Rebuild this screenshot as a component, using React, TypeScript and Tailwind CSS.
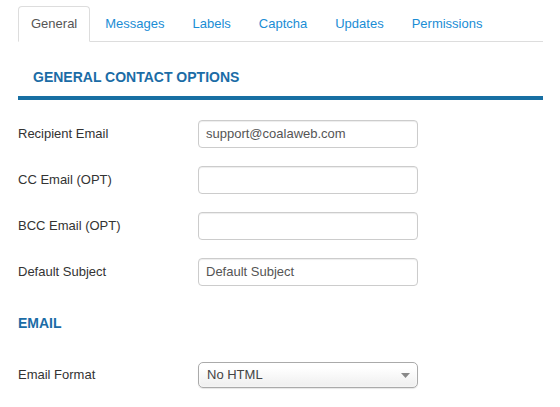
import React from "react";

const tabs = ["General", "Messages", "Labels", "Captcha", "Updates", "Permissions"];

const fields = [
  { label: "Recipient Email", value: "support@coalaweb.com" },
  { label: "CC Email (OPT)", value: "" },
  { label: "BCC Email (OPT)", value: "" },
  { label: "Default Subject", value: "Default Subject" },
];

function Tabs() {
  return (
    <ul className="flex border-b border-[#dddddd]">
      {tabs.map((tab, i) => {
        const active = i === 0;
        return (
          <li
            key={tab}
            className={
              active
                ? "-mb-px mr-[2px] rounded-t-[4px] border border-[#dddddd] border-b-white bg-white px-[12px] py-[8px] leading-[18px] text-[#555555]"
                : "-mb-px mr-[2px] rounded-t-[4px] border border-transparent px-[12px] py-[8px] leading-[18px] text-[#1a8dd5]"
            }
          >
            {tab}
          </li>
        );
      })}
    </ul>
  );
}

function Field({ label, value }: { label: string; value: string }) {
  return (
    <div className="mb-[18px] flex h-[28px] items-center">
      <label className="w-[180px] text-[#333333]">{label}</label>
      <div className="flex h-[28px] w-[220px] items-center rounded-[4px] border border-[#cccccc] bg-white px-[7px] text-[#555555] shadow-[inset_0_1px_1px_rgba(0,0,0,0.075)]">
        {value}
      </div>
    </div>
  );
}

export default function App() {
  return (
    <div className="flex min-h-[407px] flex-col bg-white pl-[18px] pr-[17px] pt-[6px] font-['Liberation_Sans',Arial,sans-serif] text-[13px]">
      <Tabs />

      <div className="mt-[25px] h-[20px] pl-[15px] text-[14px] font-bold uppercase leading-[20px] text-[#1b6ca6]">
        General Contact Options
      </div>
      <div className="mt-[9px] h-[4px] bg-[#176fa3]" />

      <div className="mt-[20px] flex flex-col">
        {fields.map((f) => (
          <Field key={f.label} label={f.label} value={f.value} />
        ))}
      </div>

      <div className="mt-[9px] h-[20px] text-[14px] font-bold uppercase leading-[20px] text-[#1b6ca6]">
        Email
      </div>

      <div className="mt-[29px] flex h-[26px] items-center">
        <label className="w-[180px] text-[#333333]">Email Format</label>
        <div className="flex h-[26px] w-[220px] items-center justify-between rounded-[5px] border border-[#aaaaaa] bg-gradient-to-b from-white from-20% to-[#eeeeee] pl-[8px] pr-[7px] text-[#444444] shadow-[0_0_3px_white_inset,0_1px_1px_rgba(0,0,0,0.1)]">
          <span>No HTML</span>
          <svg width="9" height="5" viewBox="0 0 9 5">
            <path d="M0 0 L9 0 L4.5 5 Z" fill="#888888" />
          </svg>
        </div>
      </div>
    </div>
  );
}
